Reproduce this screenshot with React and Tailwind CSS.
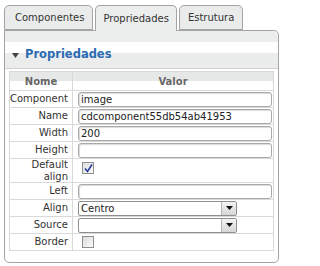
import React from "react";

const font = { fontFamily: '"DejaVu Sans", Verdana, sans-serif' };

function TextInput({ value }) {
  return (
    <div className="h-[15px] w-[194px] rounded-[3px] border border-[#a9a9a9] bg-white shadow-[inset_1px_1px_1px_rgba(0,0,0,0.15)] pl-[2px] text-[10px] leading-[13px] text-[#222]">
      {value}
    </div>
  );
}

function Select({ value }) {
  return (
    <div className="flex h-[15px] w-[159px] items-stretch rounded-[2px] border border-[#8f8f8f] bg-white text-[10px] leading-[13px] text-[#222]">
      <div className="flex-1 pl-[2px]">{value}</div>
      <div className="flex w-[15px] items-center justify-center border-l border-[#b5b5b5] bg-gradient-to-b from-[#f4f4f4] to-[#d6d6d6]">
        <svg width="7" height="4" viewBox="0 0 7 4">
          <path d="M0 0 H7 L3.5 4 Z" fill="#111" />
        </svg>
      </div>
    </div>
  );
}

function Checkbox({ checked }) {
  return (
    <div className="ml-[4px] flex h-[12px] w-[12px] items-center justify-center border border-[#8e8f8f] bg-gradient-to-br from-[#dcdcdc] to-[#fbfbfb]">
      {checked && (
        <svg width="9" height="9" viewBox="0 0 9 9">
          <path d="M1 4.5 L3.5 7.5 L8 0.5" fill="none" stroke="#2a3f9e" strokeWidth="1.6" />
        </svg>
      )}
    </div>
  );
}

function Row({ label, h = "h-[17px]", children }) {
  return (
    <div className={`flex ${h} border-t border-[#d9d9d9]`}>
      <div className="flex w-[63px] shrink-0 items-center justify-end border-r border-[#d9d9d9] pr-[4px] text-right text-[10px] leading-[12px] text-[#333]">
        {label}
      </div>
      <div className="flex flex-1 items-center pl-[5px]">{children}</div>
    </div>
  );
}

export default function App() {
  return (
    <div className="h-[266px] w-[283px] bg-white pt-[4px]" style={font}>
      {/* tabs */}
      <div className="flex h-[26px] items-end gap-[2px] pl-[4px]">
        <div className="flex h-[25px] items-center rounded-t-[5px] border border-[#a3a3a3] bg-[#eaecec] pl-[10px] pr-[8px] text-[10px] text-[#333]">
          Componentes
        </div>
        <div className="relative z-10 -mb-[1px] flex h-[26px] items-center rounded-t-[5px] border border-b-0 border-[#a3a3a3] bg-[#eceeee] px-[7px] pb-[1px] text-[10px] text-[#333]">
          Propriedades
        </div>
        <div className="flex h-[25px] items-center rounded-t-[5px] border border-[#a3a3a3] bg-[#eaecec] px-[8px] text-[10px] text-[#333]">
          Estrutura
        </div>
      </div>
      {/* panel */}
      <div className="mx-[4px] h-[233px] rounded-b-[5px] rounded-tr-[5px] border border-[#a3a3a3] bg-white">
        <div className="h-[11px] rounded-tr-[5px] bg-[#eceeee]" />
        <div className="flex h-[27px] items-center border-b border-[#cfcfcf] bg-[linear-gradient(to_bottom,#ffffff_0%,#ffffff_42%,#ebeded_42%,#ebeded_100%)] pl-[7px]">
          <svg width="7" height="5" viewBox="0 0 7 5" className="mr-[6px]">
            <path d="M0 0 H7 L3.5 5 Z" fill="#444" />
          </svg>
          <span className="text-[11.5px] font-bold text-[#2b6bb3]">Propriedades</span>
        </div>
        <div className="ml-[4px] mt-[2px] w-[265px] border border-[#d9d9d9]">
          <div className="flex h-[18px] bg-[linear-gradient(to_bottom,#e6e8e8_0%,#e6e8e8_50%,#ffffff_50%)] text-[10px] font-bold text-[#666]">
            <div className="flex w-[63px] items-center justify-center border-r border-[#d9d9d9]">Nome</div>
            <div className="flex flex-1 items-center justify-center">Valor</div>
          </div>
          <Row label="Component"><TextInput value="image" /></Row>
          <Row label="Name"><TextInput value="cdcomponent55db54ab41953" /></Row>
          <Row label="Width"><TextInput value="200" /></Row>
          <Row label="Height"><TextInput value="" /></Row>
          <Row label={<span>Default<br />align</span>} h="h-[24px]"><div className="self-start pt-[3px]"><Checkbox checked /></div></Row>
          <Row label="Left"><TextInput value="" /></Row>
          <Row label="Align"><Select value="Centro" /></Row>
          <Row label="Source"><Select value="" /></Row>
          <Row label="Border"><Checkbox /></Row>
        </div>
      </div>
    </div>
  );
}
